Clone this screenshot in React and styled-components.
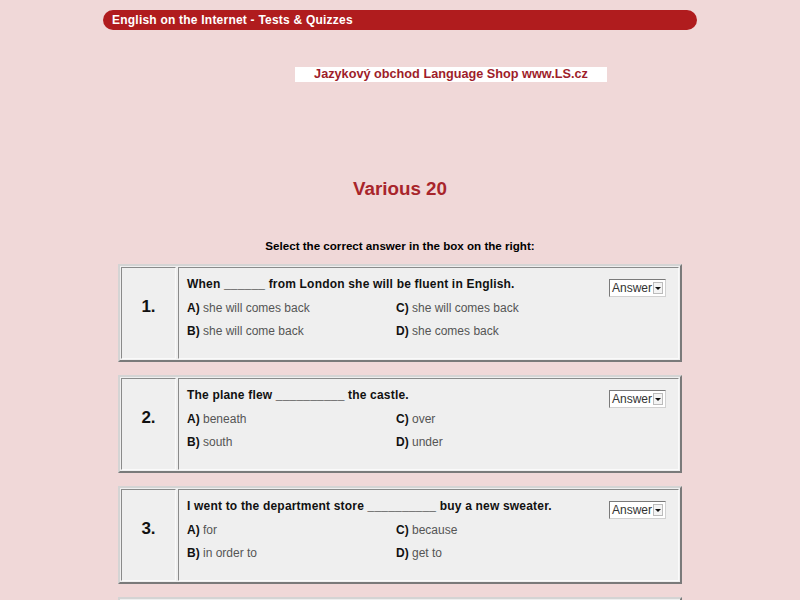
import React from "react";
import styled, { createGlobalStyle } from "styled-components";

const Global = createGlobalStyle`
  html, body { margin: 0; padding: 0; background: #f0d8d8; }
  body { font-family: "Liberation Sans", Arial, sans-serif; color: #000; }
`;

const Page = styled.div`
  width: 594px;
  margin: 0 auto;
  padding-top: 10px;
  display: flex;
  flex-direction: column;
  align-items: center;
`;

const Header = styled.div`
  width: 100%;
  box-sizing: border-box;
  height: 20px;
  background: #b01c1e;
  border-radius: 10px;
  color: #fff;
  font-weight: bold;
  font-size: 12px;
  letter-spacing: 0.22px;
  line-height: 20px;
  padding-left: 9px;
`;

const Banner = styled.div`
  align-self: flex-start;
  margin: 37px 0 0 192px;
  width: 312px;
  height: 15px;
  background: #fff;
  color: #9e1d2a;
  font-weight: bold;
  font-size: 12.7px;
  line-height: 15px;
  text-align: center;
`;

const Title = styled.h1`
  margin: 96px 0 0;
  font-size: 18.8px;
  line-height: 22px;
  color: #a8252b;
  font-weight: bold;
`;

const Instructions = styled.p`
  margin: 39px 0 0;
  font-size: 11.6px;
  line-height: 14px;
  font-weight: bold;
`;

const List = styled.div`
  margin-top: 11px;
  display: flex;
  flex-direction: column;
  gap: 13px;
`;

const QTable = styled.div`
  width: 564px;
  height: 98px;
  box-sizing: border-box;
  display: flex;
  gap: 2px;
  padding: 1px;
  border: 2px solid;
  border-color: #d4d4d4 #7a7a7a #7a7a7a #d4d4d4;
  background: #efefef;
`;

const NumCell = styled.div`
  width: 55px;
  box-sizing: border-box;
  border: 1px solid;
  border-color: #8a8a8a #fafafa #fafafa #8a8a8a;
  padding-bottom: 13px;
  display: flex;
  align-items: center;
  justify-content: center;
  font-size: 17px;
  font-weight: bold;
  color: #111;
`;

const BodyCell = styled.div`
  flex: 1;
  box-sizing: border-box;
  border: 1px solid;
  border-color: #8a8a8a #fafafa #fafafa #8a8a8a;
  padding: 8px 12px 0 8px;
  display: flex;
  justify-content: space-between;
  align-items: flex-start;
`;

const Texts = styled.div`
  display: flex;
  flex-direction: column;
`;

const Question = styled.div`
  font-size: 12px;
  font-weight: bold;
  letter-spacing: 0.19px;
  line-height: 16px;
  color: #111;
`;

const Options = styled.div`
  margin-top: 8px;
  display: grid;
  grid-template-columns: 209px 209px;
  row-gap: 7px;
`;

const Option = styled.div`
  font-size: 12px;
  line-height: 16px;
  color: #555;
  b { color: #111; }
`;

const Select = styled.div`
  margin-top: 3px;
  width: 57px;
  height: 18px;
  box-sizing: border-box;
  background: #fff;
  border: 1px solid;
  border-color: #7a7a7a #d0d0d0 #d0d0d0 #7a7a7a;
  display: flex;
  align-items: center;
  justify-content: space-between;
  padding: 0 2px 0 2px;
  font-size: 12px;
  color: #333;
`;

const Arrow = styled.span`
  width: 10px;
  height: 12px;
  box-sizing: border-box;
  border: 1px solid #bbb;
  background: #f4f4f4;
  display: flex;
  align-items: center;
  justify-content: center;
  &::after {
    content: "";
    border-left: 3px solid transparent;
    border-right: 3px solid transparent;
    border-top: 3px solid #111;
  }
`;

const questions = [
  {
    n: "1.",
    q: "When ______ from London she will be fluent in English.",
    opts: ["she will comes back", "she will comes back", "she will come back", "she comes back"],
  },
  {
    n: "2.",
    q: "The plane flew __________ the castle.",
    opts: ["beneath", "over", "south", "under"],
  },
  {
    n: "3.",
    q: "I went to the department store __________ buy a new sweater.",
    opts: ["for", "because", "in order to", "get to"],
  },
  {
    n: "4.",
    q: "She has been working here __________ 1998.",
    opts: ["for", "since", "from", "during"],
  },
];

const letters = ["A", "C", "B", "D"];

export default function App() {
  return (
    <>
      <Global />
      <Page>
        <Header>English on the Internet - Tests &amp; Quizzes</Header>
        <Banner>Jazykový obchod Language Shop www.LS.cz</Banner>
        <Title>Various 20</Title>
        <Instructions>Select the correct answer in the box on the right:</Instructions>
        <List>
          {questions.map((item) => (
            <QTable key={item.n}>
              <NumCell>{item.n}</NumCell>
              <BodyCell>
                <Texts>
                  <Question>{item.q}</Question>
                  <Options>
                    {[0, 1, 2, 3].map((i) => (
                      <Option key={i}>
                        <b>{letters[i]})</b> {item.opts[i]}
                      </Option>
                    ))}
                  </Options>
                </Texts>
                <Select>
                  Answer <Arrow />
                </Select>
              </BodyCell>
            </QTable>
          ))}
        </List>
      </Page>
    </>
  );
}
